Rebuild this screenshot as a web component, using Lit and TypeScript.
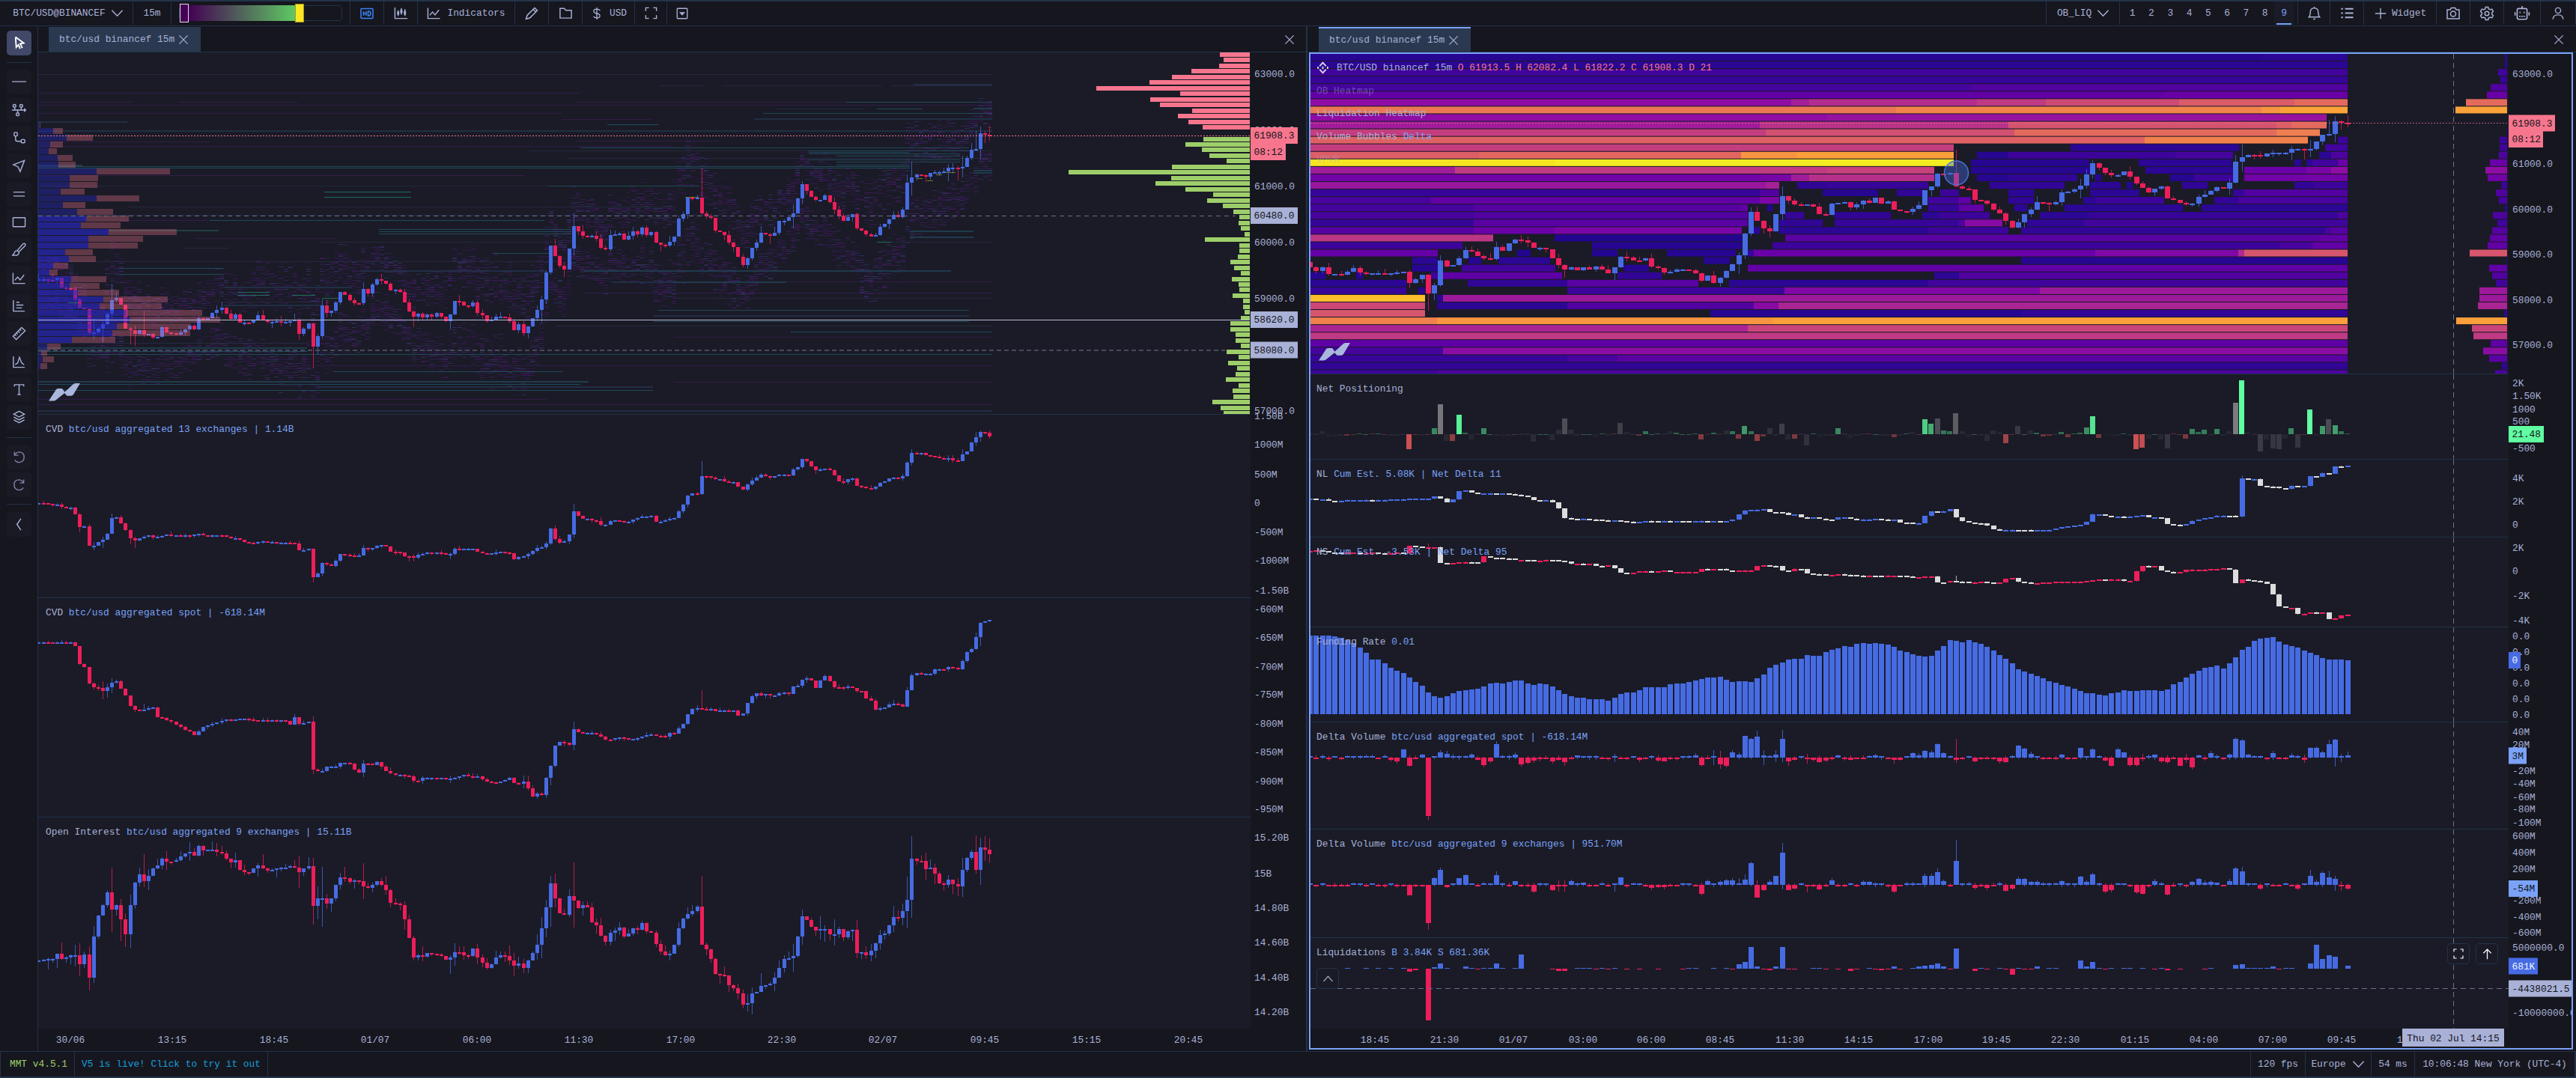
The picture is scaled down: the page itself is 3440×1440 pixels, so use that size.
import { LitElement, html, svg, css, nothing } from 'lit';
import { customElement } from 'lit/decorators.js';
import { classMap } from 'lit/directives/class-map.js';

type Range = Record<number, [number, number]>;
type Label = [number, string];
type Tag = { y: number; text: string; w: number; kind: string };

const BLUE = '#466be3';
const RED = '#ed1e5a';
const WHITE = '#dcdcdc';

const scaled = (values: number[], origin: number, factor: number) => values.map((v) => origin + v / factor);

// small deterministic generator, so the wicks and the book noise never change between renders
const random = (seed: number) => () => {
  seed = (seed * 1664525 + 1013904223) % 4294967296;
  return seed / 4294967296;
};

/* ---------- series, one entry per 15m candle, as pane y ---------- */

const PRICE = [
  ...scaled([
    100, 100, 102, 103, 94, 132, 134, 138, 180, 214, 218, 315, 311, 298, 278, 238, 182, 174, 200, 297, 303, 318, 304, 320, 318, 334,
    330, 292, 312, 316, 320, 312, 299, 284, 300, 254, 258, 254, 234, 222, 212, 238, 257, 240, 273, 273, 274, 262, 243, 263, 270, 270,
    268, 270, 270, 266, 262, 318, 298, 277, 370, 328, 205, 233, 226, 193, 151, 162, 183, 195, 196, 138, 156, 120, 100, 104, 117, 143,
    141, 150, 192, 228, 249, 238, 252, 240, 250, 234, 250, 267, 240, 186, 190, 204, 206, 192, 234, 242, 266, 260, 250, 250, 252, 267,
    304, 280, 316, 289, 256, 222, 180, 72, -36, 6, 46, 59,
  ], 340, 3),
  331.7, 302, 309.3, 315, 315.5, 315, 319, 331, 333, 314, 313.3, 312, 320, 315, 309, 312.6, 304, 314, 310, 324, 326.6, 328, 323.3,
  316, 292, 286, 264, 265, 263.7, 285, 288.6, 291, 308, 309.6, 314, 324, 330, 342.5, 354, 344.6, 331.4, 324, 311.4, 313, 315, 311,
  295, 294.6, 290, 284.6, 265, 246.4, 255, 262.5, 267, 266.8, 261, 269.6, 280, 288, 295, 289.6, 286, 305, 308, 313, 315.7, 314.3,
  302.5, 299, 293, 287, 289.6, 279.6, 244, 237, 233, 233.6, 235.7, 231, 230, 229.6, 229, 224, 224, 225.4, 223, 211, 200, 199, 178,
  180, 181.4,
];

const PRICE_WICKS: Range = {
  11: [412, 448], 12: [425, 453], 14: [427, 458], 16: [379, 425], 17: [390, 404], 20: [437, 460], 21: [435, 462], 23: [415, 450],
  48: [416, 428], 57: [425, 454], 60: [431, 492], 61: [446, 474], 62: [400, 452], 71: [377, 408], 75: [366, 380], 82: [415, 437],
  90: [419, 440], 92: [394, 409], 107: [436, 452], 110: [395, 431], 111: [362, 406], 113: [319, 343], 115: [350, 370],
  117: [285, 341], 145: [225, 287], 158: [302, 325], 160: [311, 326], 165: [273, 305], 167: [242, 272], 190: [233, 280],
  191: [216, 261], 199: [219, 242], 201: [222, 241], 202: [208, 237], 205: [175, 202], 206: [169, 212], 207: [175, 191], 208: [168, 188],
};

const CVD = [
  ...scaled([
    995, 997, 999, 1001, 1001, 1012, 1014, 1013, 1040, 1093, 1090, 1166, 1166, 1153, 1142, 1118, 1056, 1052, 1078, 1103, 1136, 1145,
    1138, 1130, 1125, 1134, 1130, 1127, 1122, 1125, 1125, 1127, 1124, 1128, 1123, 1120, 1125, 1127, 1126, 1124, 1126, 1131, 1137,
    1136, 1144, 1152, 1154, 1155, 1152, 1150, 1153, 1153, 1154, 1154, 1154, 1156, 1157, 1185, 1184, 1180, 1294, 1277, 1236, 1243,
    1247, 1228, 1200, 1203, 1207, 1208, 1205, 1176, 1181, 1177, 1168, 1165, 1170, 1190, 1191, 1194, 1208, 1210, 1214, 1202, 1199,
    1194, 1195, 1194, 1196, 1201, 1200, 1178, 1180, 1180, 1180, 1179, 1190, 1197, 1201, 1198, 1195, 1192, 1193, 1196, 1221, 1212,
    1210, 1200, 1188, 1176, 1172, 1158, 1098, 1140, 1155, 1148, 1122, 1030, 1047, 1058, 1058, 1064, 1068, 1082, 1082, 1067, 1066,
    1068, 1070, 1070, 1062, 1055, 1050, 1049, 1048, 1070, 1070, 1064, 1060, 1055, 1030, 1002, 965, 958, 961, 888,
  ], 340, 3),
  ...scaled([
    168, 171, 175, 175, 180, 181, 181, 192, 198, 187, 177, 171, 164, 167, 171, 168, 163, 163, 165, 151, 146, 128, 132, 145, 154, 151,
    150, 153, 165, 179, 181, 174, 172, 190, 192, 195, 197, 192, 183, 179, 173, 170, 172, 167, 136, 113, 114, 113, 119, 121, 122, 126,
    127, 125, 131, 132, 116, 110, 88, 77, 65, 67, 75,
  ], 540, 1.742),
];

const CVD_WICKS: Range = {
  9: [685, 711], 12: [724, 735], 14: [717, 732], 16: [686, 713], 20: [707, 727], 21: [717, 732], 60: [733, 778], 71: [728, 742],
  81: [742, 750], 82: [740, 750], 90: [738, 747], 113: [702, 722], 117: [673, 719], 145: [616, 661], 191: [600, 622],
  202: [600, 616], 205: [577, 596], 206: [575, 590],
};

const SPOT = [
  ...scaled([
    95, 95, 97, 98, 96, 95, 98, 95, 108, 170, 180, 234, 249, 250, 260, 249, 233, 228, 252, 276, 310, 323, 325, 324, 318, 316, 348,
    352, 358, 364, 374, 383, 393, 397, 409, 396, 382, 378, 372, 367, 361, 357, 358, 357, 354, 354, 357, 360, 363, 358, 361, 359, 361,
    359, 362, 374, 350, 371, 369, 364, 526, 532, 530, 516, 515, 515, 503, 503, 506, 527, 537, 505, 507, 510, 501, 517, 530, 539, 543,
    543, 545, 549, 563, 564, 555, 554, 554, 556, 555, 559, 556, 553, 550, 544, 548, 553, 550, 558, 567, 568, 570, 567, 561, 553, 571,
    573, 566, 590, 618, 606, 612, 555, 513, 445, 432, 436, 442, 390, 400, 405, 402, 402, 406, 415, 425, 426, 420, 417, 420, 424, 422,
    420, 414, 410, 406, 411, 413, 415, 402, 404, 387, 373, 339, 322, 318, 320,
  ], 820, 2.529),
  ...scaled([
    709, 709, 714, 713, 712, 713, 712, 724, 720, 695, 680, 673, 677, 675, 678, 677, 672, 671, 674, 656, 655, 641, 638, 643, 660, 643,
    632, 645, 658, 659, 661, 657, 660, 667, 668, 685, 690, 711, 708, 706, 699, 696, 698, 703, 665, 631, 626, 627, 627, 627, 616, 616,
    617, 612, 613, 617, 597, 577, 569, 541, 509, 505, 502,
  ], 540, 1.742),
];

const SPOT_WICKS: Range = {
  14: [910, 934], 15: [913, 932], 16: [906, 926], 23: [940, 949], 60: [957, 1034], 71: [1015, 1038], 82: [1035, 1046],
  90: [1036, 1046], 106: [1036, 1053], 107: [1036, 1056], 111: [1038, 1066], 112: [1022, 1049], 117: [964, 1002],
  145: [922, 948], 205: [845, 868], 206: [831, 863],
};

const INTEREST = [
  ...scaled([
    1170, 1169, 1166, 1166, 1148, 1167, 1160, 1153, 1152, 1184, 1151, 1230, 1090, 1019, 984, 942, 999, 985, 1032, 1082, 984, 909, 880,
    903, 884, 861, 850, 828, 837, 838, 832, 819, 810, 804, 817, 784, 798, 796, 796, 804, 809, 828, 839, 832, 865, 873, 874, 860, 850,
    861, 868, 866, 861, 858, 858, 853, 858, 872, 861, 852, 987, 961, 960, 979, 962, 916, 889, 894, 906, 901, 903, 920, 926, 915, 903,
    916, 934, 976, 979, 985, 1031, 1096, 1161, 1152, 1158, 1146, 1148, 1151, 1156, 1168, 1162, 1143, 1144, 1152, 1155, 1131, 1162,
    1178, 1195, 1184, 1161, 1153, 1156, 1171, 1189, 1182, 1196, 1171, 1146, 1118, 1062, 992, 911, 962, 1012, 1017, 954, 969, 993, 984,
    991, 1043, 1052, 1088, 1108, 1078, 1070, 1060, 1089, 1081, 1062, 1067, 1044, 1073, 1077, 1116, 1140, 1153, 1147, 1119, 1061, 1030,
    1014, 1004, 989, 1117,
  ], 820, 2.529),
  ...scaled([
    1269, 1290, 1326, 1328, 1330, 1351, 1358, 1371, 1397, 1393, 1371, 1367, 1354, 1352, 1348, 1334, 1312, 1291, 1289, 1284, 1238,
    1192, 1200, 1216, 1225, 1221, 1221, 1234, 1233, 1222, 1240, 1226, 1223, 1277, 1275, 1282, 1272, 1254, 1235, 1231, 1212, 1193,
    1195, 1179, 1153, 1058, 1062, 1063, 1081, 1078, 1092, 1115, 1119, 1107, 1117, 1122, 1084, 1056, 1041, 1084, 1031, 1037, 1047,
  ], 540, 1.742),
];

const INTEREST_WICKS: Range = {
  8: [1262, 1291], 9: [1260, 1304], 11: [1264, 1323], 12: [1237, 1313], 16: [1159, 1245], 18: [1201, 1257], 19: [1220, 1265],
  20: [1195, 1266], 23: [1141, 1185], 33: [1125, 1150], 57: [1143, 1186], 60: [1146, 1235], 61: [1184, 1228], 62: [1158, 1238],
  71: [1153, 1201], 90: [1276, 1301], 91: [1260, 1290], 104: [1273, 1304], 110: [1225, 1280], 111: [1202, 1252], 112: [1170, 1238],
  113: [1167, 1212], 117: [1152, 1239], 145: [1170, 1262], 155: [1328, 1351], 158: [1300, 1325], 165: [1261, 1298],
  167: [1215, 1262], 172: [1236, 1258], 174: [1228, 1263], 190: [1171, 1240], 191: [1117, 1226], 202: [1146, 1198],
  205: [1116, 1167], 206: [1119, 1182], 207: [1117, 1150], 208: [1120, 1153],
};

// the panes on the right start at candle 41
const FIRST = 41;

const NET_LONGS = scaled([
  527, 530, 530, 536, 538, 536, 533, 533, 533, 533, 534, 533, 533, 532, 532, 530, 529, 529, 529, 529, 519, 527, 543, 532, 498, 496,
  505, 508, 508, 507, 508, 508, 511, 513, 516, 521, 534, 535, 533, 542, 567, 606, 609, 610, 609, 611, 613, 615, 616, 616, 619, 621,
  622, 621, 617, 618, 619, 618, 619, 617, 618, 619, 619, 618, 619, 619, 620, 619, 612, 592, 577, 573, 573, 571, 581, 583, 584, 593,
  592, 602, 604, 604, 609, 611, 612, 604, 604, 608, 613, 611, 611, 610, 611, 614, 613, 623, 625, 626, 626, 598, 580, 583, 578, 571,
  604, 618, 623, 626, 627, 637, 650, 653, 653, 653, 654, 655, 656, 654, 654, 653, 648, 643, 638, 636, 633, 621, 592, 592, 597, 600,
  599, 601, 599, 596, 595, 603, 603, 605, 629, 632, 633, 630, 617, 613, 606, 602, 596, 596, 597, 601, 448, 450, 449, 477, 479, 480,
  487, 488, 476, 479, 478, 437, 440, 426, 428, 398, 399, 397,
], 490, 3);

const NET_SHORTS = scaled([
  737, 736, 738, 743, 744, 746, 745, 745, 746, 746, 745, 746, 747, 746, 745, 746, 718, 719, 722, 722, 722, 785, 787, 786, 784, 782,
  783, 784, 760, 764, 766, 767, 768, 773, 773, 775, 776, 776, 774, 775, 777, 780, 789, 789, 791, 790, 797, 799, 796, 808, 826, 830,
  824, 820, 819, 820, 820, 817, 822, 822, 822, 822, 822, 811, 812, 810, 811, 816, 817, 816, 815, 815, 799, 796, 797, 799, 817, 818,
  810, 811, 829, 831, 832, 833, 833, 831, 833, 835, 837, 838, 836, 837, 838, 836, 836, 838, 839, 843, 842, 841, 839, 863, 865, 857,
  860, 862, 863, 863, 862, 864, 866, 865, 849, 847, 860, 863, 869, 868, 864, 863, 862, 861, 861, 861, 860, 858, 856, 851, 852, 852,
  851, 859, 857, 820, 797, 799, 798, 816, 821, 823, 823, 813, 812, 812, 812, 811, 810, 808, 812, 866, 852, 856, 858, 861, 870, 912,
  960, 967, 966, 991, 989, 984, 986, 985, 1011, 1009, 996, 994,
], 490, 3);

const FUNDING = scaled([
  1077, 1077, 1077, 1077, 1081, 1087, 1096, 1108, 1125, 1146, 1173, 1173, 1189, 1207, 1217, 1228, 1246, 1264, 1279, 1306, 1321, 1326,
  1321, 1309, 1300, 1297, 1294, 1290, 1282, 1270, 1267, 1269, 1262, 1258, 1258, 1268, 1275, 1270, 1273, 1282, 1297, 1312, 1320, 1327,
  1327, 1333, 1333, 1333, 1339, 1327, 1312, 1304, 1304, 1297, 1285, 1285, 1285, 1285, 1273, 1268, 1270, 1262, 1257, 1251, 1246, 1246,
  1243, 1255, 1264, 1260, 1260, 1264, 1249, 1233, 1207, 1194, 1186, 1174, 1170, 1170, 1156, 1159, 1159, 1144, 1135, 1128, 1120, 1122,
  1110, 1108, 1111, 1108, 1111, 1114, 1123, 1138, 1143, 1152, 1159, 1161, 1159, 1138, 1120, 1096, 1099, 1105, 1096, 1104, 1110, 1122,
  1138, 1154, 1171, 1189, 1213, 1221, 1229, 1240, 1248, 1259, 1266, 1275, 1281, 1290, 1300, 1308, 1308, 1315, 1318, 1309, 1304, 1297,
  1298, 1300, 1297, 1295, 1297, 1300, 1294, 1273, 1264, 1245, 1229, 1218, 1207, 1204, 1198, 1208, 1189, 1164, 1134, 1121, 1099, 1089,
  1087, 1084, 1101, 1112, 1120, 1126, 1138, 1147, 1154, 1167, 1174, 1173, 1173, 1177,
], 490, 3);

// net positioning: "candle height kind", g(reen), r(ed) or w(hite)
const NET_POSITION = `43 4 w,44 -4 w,45 -3 w,47 -2 r,57 -20 r,61 8 g,62 40 w,63 -9 w,64 -9 r,65 26 g,66 2 g,67 -7 w,69 8 g,72 -3 w,
77 -10 w,80 -8 w,81 6 w,82 21 w,83 6 w,87 -4 w,91 15 w,92 3 w,94 -2 r,95 4 g,99 4 w,100 2 g,104 -7 r,106 2 g,108 5 w,109 4 g,
110 -6 r,111 11 g,112 4 g,113 -9 r,114 -3 r,115 8 w,117 14 w,118 -7 w,119 -6 r,121 -15 w,123 -4 w,126 8 g,128 -5 w,135 -4 r,
138 3 w,140 20 g,141 14 g,142 21 w,143 5 g,144 4 g,145 28 w,146 4 w,147 -4 w,150 -9 w,151 5 w,152 3 w,153 -12 r,155 11 w,157 5 w,
158 2 g,159 -3 r,160 -2 r,162 3 g,163 -4 r,165 2 g,166 9 g,167 24 g,168 -5 r,169 -2 w,170 -3 w,174 -20 r,175 -18 r,176 -6 w,
178 -7 w,179 -19 w,182 -6 r,183 7 g,184 3 g,185 6 g,187 7 g,189 4 w,190 42 w,191 72 g,192 3 w,194 -23 w,195 -7 w,196 -19 w,
197 -20 w,198 -6 w,199 8 g,200 -18 w,202 33 g,204 11 g,205 20 w,206 12 g,207 4 g,208 1 g`;

// delta panes: "candle value [wick up [wick down]]"
const DELTA_SPOT = `43 2,53 1 4,54 -3,55 -5 0 8,56 11,57 -11,59 4,60 -78 0 84,62 7 10,63 5 9,64 2,65 2,66 2,67 4,68 -3,69 -10,70 -5,
71 18 22,74 4,75 -9,76 -7,77 -4,78 -2,79 -2,80 -5,81 -3,82 -6 0 11,84 3,90 1 5 6,94 -3,97 -4,98 -5,103 3 6,104 -10,106 2 10 10,
107 -9 9 15,108 -11,109 7,110 4,111 29,112 25,113 28 36,114 3 10 10,116 4 10 6,117 25 37 6,118 -5 0 11,119 -3,121 -2 5 8,122 -3,
123 -6,124 -4,126 3,128 -3,132 3,135 -3 0 8,136 -3,138 6,139 3,140 9,141 7,142 18,143 6,144 2,145 -3 25 7,148 -5,152 -5,153 -6,
154 2,155 16,156 12,157 5,162 4,165 13,166 2,167 11,169 -4,170 -11,171 11,172 7,173 -10,174 -10,175 -2 5 5,177 4,178 -5,179 -6,
181 -11,182 -3 5 7,183 -13,184 3,186 6,187 2,189 4,190 25,191 23,192 4,196 6,199 3,201 -3 4 7,202 13,203 13,204 7,205 18 24,
206 24 25 12,207 2 5 6,208 3 8`;

const DELTA_ALL = `57 -14,60 -51 0 60,61 9,62 20 23,63 -3,65 9,66 13,71 13 18,74 5,77 -9,80 -7,81 -1 6 9,82 -1 6 9,83 5,85 3,90 1 2 9,
91 10,96 -4,97 -3,98 -3,104 -12,105 5,107 4,108 6,109 6,110 2 9,111 7 14,112 29,113 -17 6,114 -7,115 4,116 12,117 43 56 6,118 -7,
119 -5,121 -2 0 10,123 -6,125 6 9,130 4,131 4,135 -9,140 12,141 12,142 17 22,143 5,145 32 60,148 -4,150 -4,153 -8,154 -5,155 8,156 8,
157 4,158 4,162 5,165 11,166 4,167 14,169 -9,170 -7,174 -10,175 -12,177 5,179 -13,183 4,184 8,185 3,186 4,187 3,189 5,190 22 24,
191 18 24,194 -5,200 -5,202 12 20,203 4,204 16,205 10 19,206 8 12 8,207 -1 5 8,208 -5`;

const LIQUIDATIONS = `56 1,57 -4,58 -2,60 -69,61 2,62 7,66 3,71 7,74 1,75 19,81 -3,82 -3,110 6,111 9,112 29,113 3,114 -1,115 -2,
116 3,117 29,128 -3,133 -2,135 3,139 3,140 4,141 5,142 7,143 3,145 27,148 -3,154 -8,158 3,165 11,166 3,167 9,169 -1,179 -2,190 5,
191 6,196 3,202 7,203 32,204 13,205 18,206 16,208 4`;

/* ---------- liquidation heatmap: "x:level ..." per price row, "-" is a gap ---------- */

const HEAT_ROWS = [
  '1747:5 3020:6', '1747:6', '1747:10', '1747:8', '1747:11 2632:14', '1747:18 2890:20',
  '1747:30 2392:36 2416:41 2640:45 2732:51 2910:57 3064:62', '1747:66 2532:70 3020:75 3045:79', '1747:30 2440:32 3107:-',
  '1747:35 2350:43 2682:54 3040:58 3060:62 3107:-', '1747:47 2358:53 2690:62 3040:68 3098:-', '1747:59 2864:69 3082:- 3122:9',
  '1747:47 2609:- 2765:6 2990:- 3105:10', '1747:58 1975:61 2325:75 2400:78 2609:- 2640:5 2682:9 2905:11 2982:- 3097:6 3113:13',
  '1747:95 2076:97 2609:- 2632:5 2790:- 2856:6 2980:- 3064:6 3073:- 3080:6 3088:10 3122:20',
  '1747:35 1943:46 2440:48 2583:- 2632:5 2796:- 2865:6 2982:- 2997:20 3080:24 3113:30',
  '1747:22 2350:24 2392:35 2416:42 2583:- 2640:5 2682:7 2774:- 2798:5 2806:- 2898:5 2930:9 2982:- 2997:22',
  '1747:33 2358:37 2376:- 2400:7 2440:8 2575:- 2657:7 2757:- 2791:6 2832:- 2840:5 2848:- 2914:7 2948:- 3064:7 3090:9',
  '1747:8 2350:14 2376:- 2434:5 2508:- 2533:7 2568:- 2591:9 2616:- 2682:6 2716:- 2791:6 2857:- 2982:8 2997:14',
  '1747:12 1911:18 2350:25 2376:- 2575:10 2615:17 2632:- 2682:7 2716:- 2782:6 2798:9 2890:- 2957:7 2989:12',
  '1747:11 1968:15 2325:18 2334:- 2360:5 2367:- 2575:8 2616:18 2649:- 2690:6 2707:- 2757:6 2915:- 2940:6',
  '1747:12 1968:14 2334:- 2384:8 2409:- 2450:7 2525:- 2567:6 2590:9 2657:- 2724:6 2790:8 3122:13',
  '1747:8 1968:16 2334:- 2376:7 2434:- 2450:8 2615:13 2624:28 2674:- 2707:7 2782:10',
  '1747:15 1968:20 2076:24 2326:- 2342:6 2350:- 2376:6 2574:9 2682:- 2699:7 3105:12 3113:15',
  '1747:44 1994:- 2076:4 2326:- 2384:16 3097:18', '1747:9 1953:- 2126:5 2326:- 2367:9 3045:12 3088:18',
  '1747:19 1920:- 2026:4 2044:- 2126:4 2160:- 2226:5 2318:- 2334:8 2342:20 2798:26 2989:40 2997:55',
  '1886:6 1920:- 1961:5 1978:- 2001:6 2070:- 2275:5 2310:- 2699:5', '1886:5 1920:- 1952:10 2077:- 2168:5 2202:- 2334:18',
  '1747:5 1770:- 1811:5 1820:- 1911:9 1927:17 2086:- 2160:7 2219:- 2583:6 2616:14',
  '1747:6 1878:- 1960:7 2093:16 2268:- 2309:6 2574:10', '1747:8 1878:- 1894:5 1903:- 2093:9 2383:26 2724:34',
  '1747:86 1903:- 1919:6 1927:34', '1747:50 1903:- 1919:6 2093:14 2342:28 2375:38', '1747:55 1903:- 2284:5 2699:7',
  '1747:69 1919:75 2367:78', '1747:38 2334:49', '1747:45', '1747:17', '1747:11 1927:29', '1747:8 2093:12 2160:16', '1747:7',
  '1747:9 1919:13',
];

const HEAT_PROFILE = [
  3, 3, 12, 9, 22, 27, 55, 69, 0, 0, 1, 10, 10, 11, 23, 29, 26, 8, 15, 11, 3, 19, 13, 20, 23, 26, 50, 1, 24, 20, 15, 37, 37, 39, 4, 68,
  47, 45, 22, 32, 24, 7, 16,
];

const PLASMA = [
  [13, 8, 135], [65, 4, 157], [106, 0, 168], [143, 13, 164], [177, 42, 144], [204, 71, 120], [225, 100, 98], [242, 132, 75],
  [252, 166, 54], [252, 206, 37], [240, 249, 33],
];

const plasma = (level: number) => {
  const t = level / 10;
  const i = Math.min(9, Math.floor(t));
  return `rgb(${PLASMA[i].map((c, k) => Math.round(c + (PLASMA[i + 1][k] - c) * (t - i))).join(',')})`;
};

/* ---------- volume profile and order book of the left chart ---------- */

const PROFILE = [
  [2, 3], [20, 33], [38, 73], [16, 33], [14, 25], [26, 46], [27, 50], [78, 176], [42, 80], [42, 79], [30, 62], [78, 135], [33, 63],
  [52, 100], [64, 121], [57, 110], [94, 185], [67, 140], [67, 133], [36, 73], [41, 77], [20, 40], [15, 26], [44, 91], [42, 82],
  [53, 108], [87, 173], [82, 165], [118, 219], [122, 243], [105, 204], [99, 203], [45, 103], [12, 30], [4, 12], [6, 21], [3, 12],
];

const ASKS = [1345, 1354, 1344, 1275, 1228, 1171, 1040, 1248, 1173, 1198, 1277, 1241, 1267, 1302].map((x) => (1419 - x) / 1.845);
const BIDS = [
  1304, 1261, 1301, 1320, 1361, 1228, 972, 1226, 1187, 1261, 1328, 1313, 1353, 1378, 1394, 1392, 1397, 1407, 1308, 1394, 1393, 1390,
  1371, 1381, 1397, 1375, 1391, 1394, 1377, 1402, 1403, 1407, 1397, 1371, 1371, 1384, 1384, 1397, 1361, 1392, 1366, 1387, 1384, 1360,
  1391, 1376, 1378, 1327, 1347, 1354,
].map((x) => (1419 - x) / 1.845);

// resting orders: x1 x2 y, grouped by colour
const BOOK: [string, number, string][] = [
  ['#25293f', 1, '51 1325 99,880 940 114,964 1178 114,1190 1325 114,707 1325 201,757 1325 211,51 733 248,170 900 276,51 960 287,427 765 323,244 305 331,299 430 403,743 1325 435,51 410 458,1190 1325 323,1037 1154 145,51 750 349,900 1325 398'],
  ['#222e46', 2, '51 1325 174,51 170 162,480 730 361,800 960 361,817 960 376,873 1294 421,51 1325 548,1007 1325 158,425 872 516,1220 1325 112,300 470 383,299 430 407'],
  ['#331b4b', 1, '51 775 124,51 177 136,238 398 136,769 1325 136,51 1325 140,51 750 151,160 280 294,51 280 189,769 960 188,900 1325 450,420 1325 488,51 1325 540,900 1325 510,51 900 195,51 700 234,260 450 318,51 730 533,980 1325 376,780 1325 391,750 870 159'],
  ['#20495a', 1, '811 879 166,775 1294 197,51 1215 222,51 1215 224,733 934 248,280 727 294,506 763 306,506 763 309,506 763 312,658 733 338,159 299 358,159 299 366,51 410 469,51 1325 473,445 751 496,51 775 513,51 872 521,900 1294 414,873 1294 429,1080 1294 201,1080 1282 205,1117 1282 208,1080 1282 213,1117 1282 216,1117 1215 220,1130 1325 136,1019 1325 151,1171 1232 145,1056 1325 443,879 960 414,1080 1215 203'],
  ['#1f3b4c', 2, '51 425 509,425 786 509,1300 1325 227,1300 1325 230,1215 1300 308,1215 1300 316,780 1270 361,900 1050 376,51 410 464,51 110 220,1300 1325 144'],
  ['#1f6b58', 1, '433 549 256,433 549 263,317 360 390,317 360 394,390 421 394,430 452 398,1171 1190 323,91 105 404'],
  ['#204040', 2, '145 292 307'],
  ['#6d7a2a', 1, '915 933 263,1225 1232 238,1238 1246 241,1250 1258 233,1262 1276 230'],
];

/* ---------- drawing helpers ---------- */

const leftX = (i: number) => 51.9 + i * 6.105;
const rightX = (i: number) => 1907.3 + (i - 60) * 8.296;
const r = (v: number) => Math.round(v);

const rect = (x: number, y: number, w: number, h: number) => `M${x} ${y}h${w}v${h}h${-w}z`;

const candles = (
  closes: number[],
  x: (i: number) => number,
  w: number,
  opts: { first?: number; up?: string; down?: string; noise?: number; wicks?: Range } = {},
) => {
  const { first = 0, up = BLUE, down = RED, noise = 3, wicks = {} } = opts;
  const rnd = random(closes.length * 7 + r(closes[5]));
  const body = { up: '', down: '' };
  const wick = { up: '', down: '' };
  closes.forEach((close, k) => {
    const i = first + k;
    const open = k ? closes[k - 1] : close;
    const side = close <= open ? 'up' : 'down';
    const top = Math.min(open, close);
    const bottom = Math.max(open, close);
    const cx = Math.floor(x(i));
    const high = wicks[i] ? Math.min(top, wicks[i][0]) : top - rnd() * rnd() * noise * 2;
    const low = wicks[i] ? Math.max(bottom, wicks[i][1]) : bottom + rnd() * rnd() * noise * 2;
    wick[side] += rect(cx, r(high), 1, Math.max(1, r(low) - r(high)));
    body[side] += rect(cx - (w - 1) / 2, r(top), w, Math.max(noise ? 2 : 1, r(bottom) - r(top)));
  });
  return svg`
    <path d=${wick.up} fill=${up} opacity="0.75"></path>
    <path d=${wick.down} fill=${down} opacity="0.75"></path>
    <path d=${body.up} fill=${up}></path>
    <path d=${body.down} fill=${down}></path>`;
};

const deltaBars = (source: string, base: number, filler: number) => {
  const rnd = random(base);
  const known = new Map(source.split(',').map((e) => {
    const [i, ...rest] = e.trim().split(' ').map(Number);
    return [i, rest] as [number, number[]];
  }));
  const paths = { up: '', down: '' };
  const wicks = { up: '', down: '' };
  for (let i = FIRST; i <= 208; i++) {
    let [value, high = 0, low = 0] = known.get(i) ?? [rnd() > 0.5 ? 1 : -1];
    if (!known.has(i) && filler === 0 && rnd() > 0.55) continue;
    if (!high && !low && filler) {
      high = value > 0 ? value + rnd() * filler : rnd() * filler;
      low = value < 0 ? -value + rnd() * filler : rnd() * filler;
    }
    const cx = Math.floor(rightX(i));
    const side = value > 0 ? 'up' : 'down';
    const size = Math.max(filler ? 2 : 1, Math.abs(value));
    paths[side] += rect(cx - 3, value > 0 ? base - size : base, 7, size);
    if (filler) wicks[side] += rect(cx, r(base - high), 1, r(high + low));
  }
  return svg`
    <path d=${wicks.up} fill=${BLUE} opacity="0.8"></path>
    <path d=${wicks.down} fill=${RED} opacity="0.8"></path>
    <path d=${paths.up} fill=${BLUE}></path>
    <path d=${paths.down} fill=${RED}></path>`;
};

// two bands of small orders, one on each side of the price
const bookNoise = () => {
  const rnd = random(91);
  const paths = ['', '', ''];
  PRICE.forEach((price, i) => {
    const spread = i < 15 ? 35 : 62 + 14 * Math.sin(i / 7);
    for (let n = 0; n < 36; n++) {
      const offset = (0.2 + (rnd() + rnd()) * 0.5) * spread * (rnd() > 0.5 ? 1 : -1);
      const y = r((price + offset + 4) / 1.5) * 1.5;
      if (y < 72 || y > 545) continue;
      paths[rnd() > 0.85 ? 2 : rnd() > 0.6 ? 1 : 0] += rect(r(leftX(i) - 3), y, 6, 1);
    }
  });
  return svg`
    <path d=${paths[0]} fill="#2a1941"></path>
    <path d=${paths[1]} fill="#381a52"></path>
    <path d=${paths[2]} fill="#2c2c55"></path>`;
};

const heatmap = () => HEAT_ROWS.map((row, k) => {
  const y = 72 + k * 10.06;
  const stops = row.split(' ').map((s) => s.split(':'));
  return stops.map(([x, level], n) => {
    if (level === '-') return nothing;
    const end = stops[n + 1] ? Number(stops[n + 1][0]) : 3135;
    return svg`<rect x=${x} y=${y} width=${end - Number(x)} height="9" fill=${plasma(Number(level))}></rect>`;
  });
});

const heatProfile = () => HEAT_PROFILE.map((w, k) => {
  const level = HEAT_ROWS[k].split(':').pop()!;
  return w ? svg`<rect x=${3348 - w} y=${72 + k * 10.06} width=${w} height="9" fill=${plasma(Number(level === '-' ? 6 : level))}></rect>` : nothing;
});

const netPosition = () => {
  const fills: Record<string, string> = { g: '#5fffa2', r: '#ff6060', w: '#c8c8c8' };
  const known = new Set<number>();
  const rnd = random(5);
  const bars = NET_POSITION.split(',').map((entry) => {
    const [i, h, kind] = entry.trim().split(' ');
    const size = Math.abs(Number(h));
    known.add(Number(i));
    const alpha = kind === 'w' ? Math.min(0.6, 0.03 + size / 80) * (Number(h) < 0 ? 0.6 : 1) : Math.min(1, 0.28 + size / 40);
    return svg`<rect x=${r(rightX(Number(i))) - 4} y=${Number(h) > 0 ? 580 - size : 580} width="7" height=${size}
      fill=${fills[kind]} opacity=${alpha}></rect>`;
  });
  const rest = [];
  for (let i = FIRST; i < 208; i++) {
    if (known.has(i)) continue;
    const kind = 'gwrww'[Math.floor(rnd() * 5)];
    rest.push(svg`<rect x=${r(rightX(i)) - 4} y=${rnd() > 0.5 ? 579 : 580} width="7" height=${kind === 'w' ? 2 : 1}
      fill=${fills[kind]} opacity=${kind === 'w' ? 0.08 : 0.3}></rect>`);
  }
  return [bars, rest];
};

const logo = (x: number, y: number) => svg`
  <g transform="translate(${x} ${y})" fill="#a9b7dc">
    <path d="M0 23.500 10 8.300Q11 7 13 7h5l4 5.500L9.500 22.500q-1.500 1-3 1z"></path>
    <path d="M20.500 12.500 33 1q1.500-1 3-1h6L33 15q-1.200 1.800-3 1.800h-5.500z"></path>
  </g>`;

/* ---------- icons ---------- */

const ICONS: Record<string, unknown> = {
  chevron: svg`<path d="M2.500 6 10 14 17.500 6"></path>`,
  close: svg`<path d="M3 3 17 17M17 3 3 17"></path>`,
  hd: svg`<rect x="2" y="3.500" width="16" height="13" rx="1"></rect><path d="M5.500 7v6M5.500 10h3.500M9 7v6M11.500 7v6h1q2.500 0 2.500-3t-2.500-3z"></path>`,
  candles: svg`<path d="M1.500 2v15.500H19M6 6v8M10.500 3v9M15.500 4.500v9.500"></path><path d="M6 8v4M10.500 5v5M15.500 7v5" stroke-width="3"></path>`,
  trend: svg`<path d="M1.500 2.500v15H18.500M4 13 8 8.500l3.500 4 5.500-7"></path>`,
  pencil: svg`<path d="M2.500 17.500 4 12.500 14 2.500 17.500 6 7.500 16zM12 4.500 15.500 8"></path>`,
  folder: svg`<path d="M2 3.500h6l2 2.500h8v11H2z"></path>`,
  dollar: svg`<path d="M10 1v18M15 5.500Q13 3.500 10 3.500q-4.500 0-4.500 3T10 10t4.500 3.500-4.500 3q-3 0-5-2"></path>`,
  corners: svg`<path d="M2.500 7V2.500H7M13 2.500h4.500V7M17.500 13v4.500H13M7 17.500H2.500V13"></path>`,
  dropdown: svg`<rect x="2.500" y="2.500" width="15" height="15" rx="1"></rect><path d="M5.500 8h9L10 13z" fill="currentColor" stroke="none"></path>`,
  bell: svg`<path d="M2.500 15.500Q4.500 13.500 4.500 8.500 4.500 3 10 3t5.500 5.500q0 5 2 7zM10 1v2M8.500 18.500h3"></path>`,
  list: svg`<path d="M7 4h11.500M7 10h11.500M7 16h11.500M1.500 4h2.500M1.500 10H4M1.500 16H4" stroke-width="2"></path>`,
  plus: svg`<path d="M10 2v16M2 10h16"></path>`,
  camera: svg`<path d="M2 5h4l1.500-2.500h5L14 5h4v12H2z"></path><circle cx="10" cy="10.500" r="3.500"></circle>`,
  gear: svg`<path d="M8.300 1.500h3.400l.6 2.500 2 1 2.400-.9 1.800 3-1.800 1.800v2.200l1.800 1.800-1.800 3-2.400-.9-2 1-.6 2.500H8.300L7.700 16l-2-1-2.400.9-1.800-3 1.800-1.800V8.900L1.500 7.100l1.800-3 2.400.9 2-1z"></path><circle cx="10" cy="10" r="2.800"></circle>`,
  robot: svg`<path d="M10 1v3M4 6Q4 4 6 4h8q2 0 2 2v9q0 2-2 2H6q-2 0-2-2zM1.500 8.500v4M18.500 8.500v4M7.500 8v1.500M12.500 8v1.500"></path><path d="M6.500 13.500h7" stroke-dasharray="1.600 1"></path>`,
  user: svg`<circle cx="10" cy="5.500" r="4"></circle><path d="M2.500 18.500q0-6.500 7.500-6.500t7.500 6.500"></path>`,
  cursor: svg`<path d="M5 1.500 16.500 10l-5 1 3 6M5 1.500 6 16l3-3.500 2.500 5.500" stroke-width="2"></path>`,
  line: svg`<path d="M-1 9.500h22" stroke-width="1.300"></path>`,
  fib: svg`<path d="M0 9.500h18M4 6v3.500M13 6v3.500M8 9.500v4"></path><path d="M17 6.500 20.500 9.500 17 12.500z" fill="currentColor" stroke="none"></path><circle cx="3.500" cy="3.500" r="2"></circle><circle cx="13" cy="3.500" r="2"></circle><circle cx="8" cy="15.500" r="2"></circle>`,
  nodes: svg`<rect x="3" y="2" width="4.500" height="5" rx="1"></rect><rect x="13" y="12" width="5" height="4.500" rx="1"></rect><path d="M5 7v4.500q0 3 3 3h5"></path>`,
  arrow: svg`<path d="M17.500 2.500 2 8.500l6.500 3 3 6.500z"></path>`,
  parallel: svg`<path d="M2 7h16M2 12.500h16"></path>`,
  square: svg`<rect x="1.500" y="4" width="17" height="12.500" rx=".5"></rect>`,
  brush: svg`<path d="M0.500 18q2.500-1.500 3-4 1-3 4-2.500 3 1.500 2 4-1 2.500-4 2.500zM7.500 11 15.500 2q2-1.200 3 0 1 1.500-.5 3L10 13"></path>`,
  profile: svg`<path d="M2 2v15.500H18M6 5h4.500M6 9h10M6 13h8"></path>`,
  ruler: svg`<path d="M1.500 14 13.500 1.500 18.500 6 6 18.500zM11.500 4.500l1.500 1.500M9 7l2 2M6.500 9.500 8 11M4.500 12l1.500 1.500"></path>`,
  peak: svg`<path d="M2 2v15.500H18M4.500 13.500l3.500-2 2.500-8L13.500 11l3.500 3"></path>`,
  text: svg`<path d="M3.500 5.500V3h13v2.500M10 3v14M7.500 17h5"></path>`,
  layers: svg`<path d="m10 1.500 7.500 4-7.500 4-7.500-4zM2.500 9.500l7.500 4 7.500-4M2.500 13.500l7.500 4 7.500-4"></path>`,
  undo: svg`<path d="M3.500 2.500v5H9M4 7Q6.500 3 10.500 3q6.500.5 6.500 7t-6.500 7.500Q6 17.500 4 14"></path>`,
  redo: svg`<path d="M16.500 2.500v5H11M16 7Q13.500 3 9.500 3 3 3.500 3 10t6.500 7.500q4.500 0 6.500-3.500"></path>`,
  back: svg`<path d="M12.500 2 7 10l5.500 8"></path>`,
  up: svg`<path d="M10 18V2.500M4 8.500l6-6 6 6"></path>`,
  caret: svg`<path d="M3 14 10 6l7 8"></path>`,
};

const icon = (name: string, size = 18) => html`
  <svg class="icon" width=${size} height=${size} viewBox="0 0 20 20" fill="none" stroke="currentColor" stroke-width="1.500">${ICONS[name]}</svg>`;

const base = css`
  :host {
    box-sizing: border-box;
    font-family: 'Liberation Mono', 'DejaVu Sans Mono', monospace;
    font-size: 12.85px;
    color: #a9b1d6;
  }

  * {
    box-sizing: border-box;
  }

  svg {
    display: block;
    flex: none;
  }
`;

@customElement('top-bar')
export class TopBar extends LitElement {
  static styles = [base, css`
    :host {
      display: flex;
      height: 35px;
      background: #16161e;
      border-top: 2px solid #22324a;
      border-bottom: 1px solid #22324a;
      padding-left: 1px;
      padding-bottom: 1px;
    }

    .cell {
      display: flex;
      align-items: center;
      justify-content: center;
      gap: 8px;
      border-right: 1px solid #22324a;
      height: 100%;
      white-space: nowrap;
    }

    .cell.open {
      border-right: none;
    }

    .symbol { width: 177px; gap: 6px; padding-left: 5px; }
    .frame { width: 51px; }
    .range { width: 239px; }
    .small { width: 45px; }
    .indicators { width: 130px; }
    .currency { width: 70px; }
    .full { width: 43px; }
    .drop { width: 40px; }
    .spacer { flex: 1; border-right: 1px solid #22324a; }
    .layout { width: 98px; gap: 6px; padding-left: 2px; }
    .tabs { width: 238px; gap: 0; padding-left: 4px; justify-content: flex-start; }
    .bell { width: 43px; }
    .widget { width: 97px; gap: 6px; }
    .robot { width: 49px; }
    .user { width: 47px; }

    .hd {
      color: #3b82f6;
    }

    .scale {
      width: 218px;
      height: 21px;
      border: 1px solid #22324a;
      border-radius: 5px;
      display: flex;
      align-items: center;
    }

    .handle {
      width: 12px;
      height: 25px;
      border: 1px solid #e6d9f2;
      background: #440154;
    }

    .handle.high {
      background: #fde725;
      border-color: #a59a1e;
    }

    .ramp {
      width: 142px;
      height: 21px;
      background: linear-gradient(90deg, #440154, #5ec962);
    }

    .num {
      width: 25.3px;
      height: 100%;
      display: flex;
      align-items: center;
      justify-content: center;
    }

    .num.active {
      color: #7aa2f7;
      background: linear-gradient(#7aa2f7, #7aa2f7) center bottom / 20px 2px no-repeat, #1a1b26;
    }
  `];

  render() {
    return html`
      <div class="cell symbol">BTC/USD@BINANCEF ${icon('chevron', 19)}</div>
      <div class="cell frame">15m</div>
      <div class="cell range">
        <div class="scale">
          <div class="handle"></div>
          <div class="ramp"></div>
          <div class="handle high"></div>
        </div>
      </div>
      <div class="cell small hd">${icon('hd', 20)}</div>
      <div class="cell small">${icon('candles', 19)}</div>
      <div class="cell indicators">${icon('trend', 19)} Indicators</div>
      <div class="cell small">${icon('pencil', 20)}</div>
      <div class="cell small">${icon('folder', 19)}</div>
      <div class="cell currency">${icon('dollar')} USD</div>
      <div class="cell full">${icon('corners', 19)}</div>
      <div class="cell drop open">${icon('dropdown')}</div>
      <div class="spacer"></div>
      <div class="cell layout">OB_LIQ ${icon('chevron', 19)}</div>
      <div class="cell tabs">
        ${[1, 2, 3, 4, 5, 6, 7, 8, 9].map((n) => html`<div class=${classMap({ num: true, active: n === 9 })}>${n}</div>`)}
      </div>
      <div class="cell bell">${icon('bell', 19)}</div>
      <div class="cell small">${icon('list', 19)}</div>
      <div class="cell widget">${icon('plus')} Widget</div>
      <div class="cell small">${icon('camera', 20)}</div>
      <div class="cell small">${icon('gear', 20)}</div>
      <div class="cell robot">${icon('robot', 22)}</div>
      <div class="cell user">${icon('user')}</div>
    `;
  }
}

@customElement('side-bar')
export class SideBar extends LitElement {
  static styles = [base, css`
    :host {
      display: flex;
      flex-direction: column;
      align-items: center;
      gap: 4.350px;
      width: 51px;
      padding: 5.700px 0 0 0;
      background: #16161e;
      border-right: 1px solid #22324a;
    }

    .tool {
      width: 33px;
      height: 33px;
      flex: none;
      border-radius: 5px;
      background: #191a24;
      display: flex;
      align-items: center;
      justify-content: center;
    }

    .tool.active {
      background: #414868;
      color: #fff;
    }

    .tool.dim {
      color: #7d83a3;
    }

    hr {
      width: 33px;
      height: 1px;
      flex: none;
      border: none;
      background: #22324a;
      margin: 4.900px 0;
    }
  `];

  tool(name: string, state = '') {
    return html`<div class="tool ${state}">${icon(name, 19)}</div>`;
  }

  render() {
    const tools = ['line', 'fib', 'nodes', 'arrow', 'parallel', 'square', 'brush', 'trend', 'profile', 'ruler', 'peak', 'text', 'layers'];
    return html`
      ${this.tool('cursor', 'active')}
      <hr>
      ${tools.map((t) => this.tool(t))}
      <hr>
      ${this.tool('undo', 'dim')}
      ${this.tool('redo', 'dim')}
      <hr>
      ${this.tool('back')}
    `;
  }
}

@customElement('status-bar')
export class StatusBar extends LitElement {
  static styles = [base, css`
    :host {
      display: flex;
      height: 36px;
      background: #16161e;
      border: 1px solid #22324a;
      border-bottom-width: 2px;
      border-right-width: 2px;
    }

    .cell {
      display: flex;
      align-items: center;
      justify-content: center;
      gap: 7px;
      white-space: nowrap;
      border-right: 1px solid #22324a;
    }

    .version { width: 99px; color: #9ece6a; padding-left: 3px; }
    .news { width: 258px; color: #159fdc; }
    .spacer { flex: 1; border-right: 1px solid #22324a; }
    .fps { width: 73px; }
    .region { width: 88px; }
    .ping { width: 58px; }
    .clock { width: 213px; border: none; }
  `];

  render() {
    return html`
      <div class="cell version">MMT v4.5.1</div>
      <div class="cell news">V5 is live! Click to try it out</div>
      <div class="spacer"></div>
      <div class="cell fps">120 fps</div>
      <div class="cell region">Europe ${icon('chevron', 19)}</div>
      <div class="cell ping">54 ms</div>
      <div class="cell clock">10:06:48 New York (UTC-4)</div>
    `;
  }
}

const windowStyles = css`
  :host {
    display: flex;
    flex-direction: column;
    background: #16161e;
  }

  .head {
    display: flex;
    justify-content: space-between;
    align-items: center;
    height: 35px;
    padding: 1px 14px 0 14px;
    border-bottom: 1px solid #22324a;
  }

  .tab {
    display: flex;
    align-items: center;
    gap: 4px;
    width: 203px;
    height: 100%;
    padding-left: 14px;
    background: #2a3950;
    white-space: nowrap;
  }

  .body {
    display: flex;
    flex: 1;
    min-height: 0;
  }

  .plots {
    display: flex;
    flex-direction: column;
    background: #1a1b26;
  }

  .pane {
    position: relative;
    overflow: hidden;
    border-bottom: 1px solid #22324a;
    flex: none;
  }

  .pane:last-of-type {
    border-bottom: none;
  }

  .legend {
    position: absolute;
    left: 10px;
    top: -0.5px;
    line-height: 40px;
    white-space: pre;
  }

  .legend b {
    font-weight: normal;
    color: #7aa2f7;
  }

  .axis text,
  .times text {
    fill: #a9b1d6;
    font-size: 12.85px;
  }

  .times {
    background: #16161e;
  }

  .axis .tag-text { fill: #14151d; }
  .axis .light { fill: #f0f3ff; }
  .red { fill: #f7768e; }
  .pale { fill: #a9b1d6; }
  .green { fill: #60fda1; }
  .sky { fill: #7aa2f7; }
  .royal { fill: #466be3; }
`;

const axis = (x: number, y: number, w: number, h: number, labels: Label[], tags: Tag[]) => html`
  <svg class="axis" width=${w} height=${h} viewBox="${x} ${y} ${w} ${h}">
    ${labels.map(([ly, text]) => svg`<text x=${x + 5} y=${ly + 4}>${text}</text>`)}
    ${tags.map((t) => svg`
      <rect class=${t.kind} x=${x} y=${t.y - 11} width=${t.w} height="22"></rect>
      <text class=${t.kind === 'royal' ? 'light' : 'tag-text'} x=${x + 4.500} y=${t.y + 4}>${t.text}</text>`)}
  </svg>`;

const times = (x: number, w: number, h: number, labels: Label[], extra: unknown = nothing) => html`
  <svg class="times" width=${w} height=${h} viewBox="${x} 1374 ${w} ${h}">
    ${labels.map(([lx, text]) => svg`<text x=${lx} y="1392.500" text-anchor="middle">${text}</text>`)}
    ${extra}
  </svg>`;

const legend = (name: string, detail = '') => html`<div class="legend">${name} <b>${detail}</b></div>`;

@customElement('book-window')
export class BookWindow extends LitElement {
  static styles = [base, windowStyles];

  pane(top: number, bottom: number, content: unknown, label: unknown = nothing) {
    const h = bottom - top;
    return html`
      <div class="pane" style="height: ${h}px">
        <svg width="1619" height=${h} viewBox="51 ${top} 1619 ${h}" shape-rendering="crispEdges">${content}</svg>
        ${label}
      </div>`;
  }

  main() {
    return svg`
      ${bookNoise()}
      ${BOOK.map(([color, width, lines]) => svg`<path stroke=${color} stroke-width=${width} d=${lines.split(',').map((l) => {
        const [x1, x2, y] = l.split(' ');
        return `M${x1} ${Number(y) + 0.5}H${x2}`;
      }).join('')}></path>`)}
      ${candles(PRICE, leftX, 5, { wicks: PRICE_WICKS, noise: 5 })}
      ${PROFILE.map(([blue, total], k) => {
        const y = r(162.5 + k * 8.970);
        const inArea = k > 13 && k < 33;
        return svg`
          <rect x="51" y=${y} width=${blue} height="8" fill=${inArea ? '#2828c8' : '#2626a8'} opacity=${inArea ? 0.64 : 0.48}></rect>
          <rect x=${51 + blue} y=${y} width=${total - blue} height="8" fill="#f7768e" opacity="0.32"></rect>`;
      })}
      ${ASKS.map((w, k) => svg`<rect class="red" x=${1669 - w} y=${r(70 + k * 7.48)} width=${w} height="6"></rect>`)}
      ${BIDS.map((w, k) => svg`<rect fill="#9ece6a" x=${1669 - w} y=${r(182.5 + k * 7.48)} width=${w} height="6"></rect>`)}
      <path d="M51 181.500H1669" stroke="#f7768e" stroke-dasharray="2 2"></path>
      <path d="M51 288.500H1650" stroke="#6a6f87" stroke-dasharray="6 5"></path>
      <path d="M51 427.500H1669" stroke="#b4bad6"></path>
      <path d="M51 468H1636" stroke="#474a5c" stroke-width="2" stroke-dasharray="6 4"></path>
      <g shape-rendering="auto">${logo(65, 512)}</g>`;
  }

  render() {
    return html`
      <div class="head">
        <div class="tab">btc/usd binancef 15m ${icon('close', 16)}</div>
        ${icon('close', 16)}
      </div>
      <div class="body">
        <div class="plots">
          ${this.pane(70, 554, this.main())}
          ${this.pane(554, 799, candles(CVD, leftX, 5, { wicks: CVD_WICKS, noise: 2.5 }), legend('CVD', 'btc/usd aggregated 13 exchanges | 1.14B'))}
          ${this.pane(799, 1092, candles(SPOT, leftX, 5, { wicks: SPOT_WICKS, noise: 2.5 }), legend('CVD', 'btc/usd aggregated spot | -618.14M'))}
          ${this.pane(1092, 1374, candles(INTEREST, leftX, 5, { wicks: INTEREST_WICKS, noise: 9 }), legend('Open Interest', 'btc/usd aggregated 9 exchanges | 15.11B'))}
          ${times(51, 1619, 30, [
            [94, '30/06'], [230, '13:15'], [366, '18:45'], [501, '01/07'], [637, '06:00'], [773, '11:30'], [909, '17:00'],
            [1044, '22:30'], [1179, '02/07'], [1315, '09:45'], [1451, '15:15'], [1587, '20:45'],
          ])}
        </div>
        ${axis(1670, 70, 74, 1334, [
          [99, '63000.0'], [174, '62000.0'], [249, '61000.0'], [324, '60000.0'], [399, '59000.0'], [549, '57000.0'],
          [555.5, '1.50B'], [594, '1000M'], [633.5, '500M'], [672, '0'], [710.5, '-500M'], [749, '-1000M'], [788.5, '-1.50B'],
          [814, '-600M'], [852, '-650M'], [891, '-700M'], [928, '-750M'], [966.5, '-800M'], [1005, '-850M'], [1043.5, '-900M'],
          [1081, '-950M'], [1119, '15.20B'], [1166.5, '15B'], [1213, '14.80B'], [1259, '14.60B'], [1306, '14.40B'], [1351.5, '14.20B'],
        ], [
          { y: 181, text: '61908.3', w: 63, kind: 'red' },
          { y: 203, text: '08:12', w: 47, kind: 'red' },
          { y: 288, text: '60480.0', w: 63, kind: 'pale' },
          { y: 427, text: '58620.0', w: 63, kind: 'pale' },
          { y: 467.5, text: '58080.0', w: 63, kind: 'pale' },
        ])}
      </div>
    `;
  }
}

@customElement('heat-window')
export class HeatWindow extends LitElement {
  static styles = [base, windowStyles, css`
    .head {
      padding-left: 15px;
      padding-right: 15px;
    }

    .tab {
      border-top: 2px solid #7aa2f7;
    }

    .body {
      margin: 0 4px 2px 2px;
      border: 2px solid #7aa2f7;
    }

    .legend {
      left: 8px;
    }

    .stack {
      position: absolute;
      left: 8px;
      top: 3px;
      display: flex;
      flex-direction: column;
    }

    .stack div {
      display: flex;
      align-items: center;
      height: 30.800px;
      white-space: pre;
    }

    .stack svg {
      margin-right: 10px;
    }

    .stack .off {
      opacity: 0.4;
    }

    .stack i {
      font-style: normal;
      color: #f7768e;
    }

    .stack b {
      font-weight: normal;
      color: #7aa2f7;
    }

    .button {
      position: absolute;
      display: flex;
      align-items: center;
      justify-content: center;
      width: 30px;
      height: 28px;
      border: 1px solid #22324a;
      border-radius: 5px;
      background: #1a1b26;
    }

    .fold { left: 8px; top: 40px; }
    .full { right: 52px; top: 7px; color: #fff; }
    .raise { right: 14px; top: 7px; color: #fff; }
  `];

  pane(top: number, bottom: number, content: unknown, label: unknown = nothing) {
    const h = bottom - top;
    return html`
      <div class="pane" style="height: ${h}px">
        <svg width="1600" height=${h} viewBox="1750 ${top} 1600 ${h}" shape-rendering="crispEdges">
          ${content}
          <path d="M3276.500 ${top}V${bottom}" stroke="#6a6f87" stroke-dasharray="7 5"></path>
        </svg>
        ${label}
      </div>`;
  }

  main() {
    const closes = PRICE.map((y) => 99 + (y - 99.3) * 0.8058);
    const wicks: Range = {};
    for (const [i, [a, b]] of Object.entries(PRICE_WICKS)) {
      wicks[Number(i)] = [99 + (a - 99.3) * 0.8058, 99 + (b - 99.3) * 0.8058];
    }
    return svg`
      <g shape-rendering="auto">${heatmap()}${heatProfile()}</g>
      ${candles(closes.slice(FIRST - 1), rightX, 7, { first: FIRST - 1, wicks, noise: 4 })}
      <path d="M1750 164.500H3350" stroke="#f7768e" stroke-dasharray="2 2" opacity="0.7"></path>
      <g shape-rendering="auto">
        <circle cx="2612.500" cy="231" r="16" fill="#466be3" fill-opacity="0.4" stroke="#4a72d8" stroke-width="1.500"></circle>
        ${logo(1761, 458)}
      </g>`;
  }

  header() {
    return html`
      <div class="stack">
        <div>
          <svg width="17" height="17" viewBox="0 0 20 20" fill="none" stroke="#d5dbf2" stroke-width="2.200">
            <path d="M5 7.500l5-5.500 5 5.500M5 12.500l5 5.500 5-5.500M2.500 8.200v3.600M17.500 8.200v3.600M10 8v4"></path>
          </svg>BTC/USD binancef 15m <i>O 61913.5 H 62082.4 L 61822.2 C 61908.3 D 21</i>
        </div>
        <div class="off">OB Heatmap</div>
        <div>Liquidation Heatmap</div>
        <div>Volume Bubbles <b>Delta</b></div>
        <div class="off">VPVR</div>
      </div>`;
  }

  funding() {
    const d = FUNDING.map((y, k) => rect(Math.floor(rightX(FIRST + k)) - 3, r(y), 7, 954 - r(y))).join('');
    return svg`<path d=${d} fill=${BLUE}></path>`;
  }

  render() {
    return html`
      <div class="head">
        <div class="tab">btc/usd binancef 15m ${icon('close', 16)}</div>
        ${icon('close', 16)}
      </div>
      <div class="body">
        <div class="plots">
          ${this.pane(72, 500, this.main(), this.header())}
          ${this.pane(500, 614, netPosition(), legend('Net Positioning'))}
          ${this.pane(614, 718, candles(NET_LONGS, rightX, 7, { first: FIRST, down: WHITE, noise: 0.7, wicks: { 191: [635, 691] } }), legend('NL', 'Cum Est. 5.08K | Net Delta 11'))}
          ${this.pane(718, 838, candles(NET_SHORTS, rightX, 7, { first: FIRST, up: RED, down: WHITE, noise: 0.7, wicks: { 60: [726, 731], 145: [769, 777] } }), legend('NS', 'Cum Est. -3.53K | Net Delta 95'))}
          ${this.pane(838, 965, this.funding(), legend('Funding Rate', '0.01'))}
          ${this.pane(965, 1108, deltaBars(DELTA_SPOT, 1012, 3), legend('Delta Volume', 'btc/usd aggregated spot | -618.14M'))}
          ${this.pane(1108, 1253, deltaBars(DELTA_ALL, 1182, 3), legend('Delta Volume', 'btc/usd aggregated 9 exchanges | 951.70M'))}
          ${this.pane(1253, 1374, svg`
            ${deltaBars(LIQUIDATIONS, 1294, 0)}
            <path d="M1750 1320.500H3350" stroke="#6a6f87" stroke-dasharray="7 5"></path>`, html`
            ${legend('Liquidations', 'B 3.84K S 681.36K')}
            <div class="button fold">${icon('caret', 17)}</div>
            <div class="button full">${icon('corners', 16)}</div>
            <div class="button raise">${icon('up', 17)}</div>`)}
          ${times(1750, 1600, 26, [
            [1836, '18:45'], [1929, '21:30'], [2021, '01/07'], [2114, '03:00'], [2205, '06:00'], [2297, '08:45'], [2390, '11:30'],
            [2482, '14:15'], [2575, '17:00'], [2666, '19:45'], [2758, '22:30'], [2851, '01:15'], [2943, '04:00'], [3035, '07:00'],
            [3127, '09:45'], [3220, '12:30'],
          ], svg`
            <rect class="pale" x="3208" y="1374" width="136" height="24"></rect>
            <text class="cursor-time" x="3276" y="1391" text-anchor="middle" style="fill: #14151d">Thu 02 Jul 14:15</text>`)}
        </div>
        ${axis(3350, 72, 84, 1328, [
          [99, '63000.0'], [219, '61000.0'], [279.5, '60000.0'], [340, '59000.0'], [400.5, '58000.0'], [461, '57000.0'],
          [511.5, '2K'], [529, '1.50K'], [547, '1000'], [563, '500'], [598.5, '-500'], [639, '4K'], [670, '2K'], [700.5, '0'],
          [731.5, '2K'], [763, '0'], [796, '-2K'], [829, '-4K'], [850, '0.0'], [871, '0.0'], [892, '0.0'], [913, '0.0'], [934, '0.0'],
          [954.5, '0.0'], [977.5, '40M'], [995, '20M'], [1029.5, '-20M'], [1047, '-40M'], [1064.5, '-60M'], [1081, '-80M'],
          [1098.5, '-100M'], [1117, '600M'], [1139, '400M'], [1160.5, '200M'], [1203, '-200M'], [1225, '-400M'], [1246, '-600M'],
          [1265.5, '5000000.0'], [1352.5, '-10000000.0'],
        ], [
          { y: 164.5, text: '61908.3', w: 62, kind: 'red' },
          { y: 186, text: '08:12', w: 46, kind: 'red' },
          { y: 580, text: '21.48', w: 47, kind: 'green' },
          { y: 882, text: '0', w: 16, kind: 'royal' },
          { y: 1009.5, text: '3M', w: 24, kind: 'sky' },
          { y: 1187, text: '-54M', w: 39, kind: 'sky' },
          { y: 1290.5, text: '681K', w: 39, kind: 'royal' },
          { y: 1320.5, text: '-4438021.5', w: 84, kind: 'pale' },
        ])}
      </div>
    `;
  }
}

@customElement('app-root')
export class AppRoot extends LitElement {
  static styles = css`
    :host {
      display: flex;
      flex-direction: column;
      width: 100%;
      height: 100vh;
      overflow: hidden;
      background: #16161e;
    }

    main {
      display: flex;
      flex: 1;
      min-height: 0;
    }

    book-window {
      width: 1693px;
    }

    heat-window {
      flex: 1;
      border-left: 2px solid #22324a;
    }
  `;

  render() {
    return html`
      <top-bar></top-bar>
      <main>
        <side-bar></side-bar>
        <book-window></book-window>
        <heat-window></heat-window>
      </main>
      <status-bar></status-bar>
    `;
  }
}
